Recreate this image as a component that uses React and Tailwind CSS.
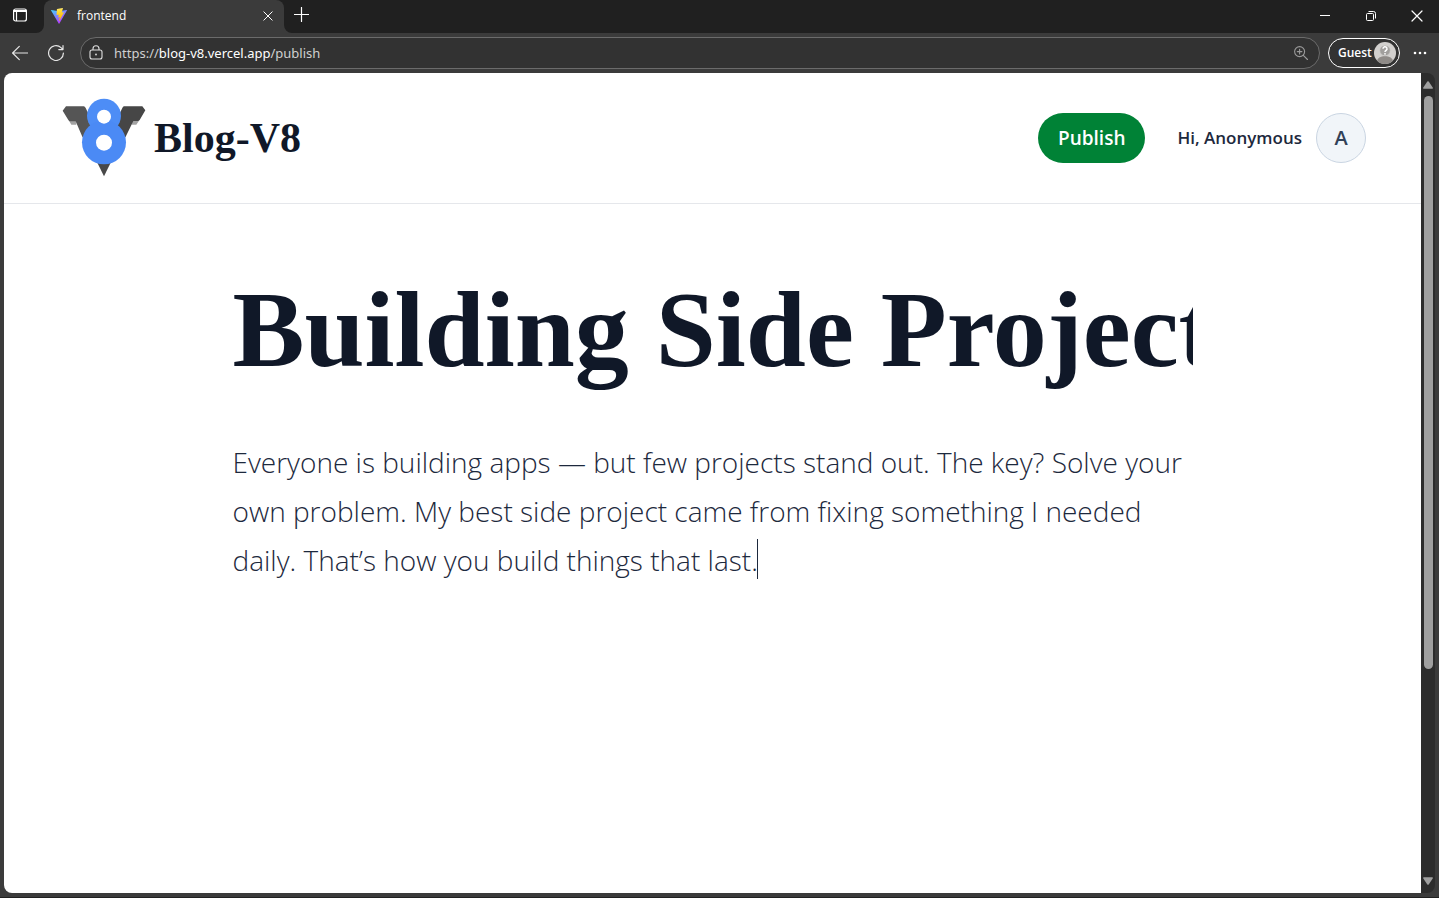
import React from "react";

const UI_FONT = "font-['Open_Sans','Noto_Sans',sans-serif]";
const SERIF_FONT = "font-['Liberation_Serif',serif]";

function ViteLogo() {
  return (
    <svg viewBox="0 0 16 16" className="size-4 shrink-0" aria-hidden="true">
      <defs>
        <linearGradient id="vite-body" x1="0" y1="0" x2="0.6" y2="1">
          <stop offset="0" stopColor="#41d1ff" />
          <stop offset="1" stopColor="#bd34fe" />
        </linearGradient>
        <linearGradient id="vite-bolt" x1="0.5" y1="0" x2="0.6" y2="1">
          <stop offset="0" stopColor="#ffea83" />
          <stop offset="0.2" stopColor="#ffdd35" />
          <stop offset="1" stopColor="#ffa800" />
        </linearGradient>
      </defs>
      <path d="M15.9 2.5 8.4 15.6a.4.4 0 0 1-.7 0L.1 2.5a.4.4 0 0 1 .4-.6L8 3.2l7.5-1.3a.4.4 0 0 1 .4.6Z" fill="url(#vite-body)" />
      <path d="m11.5 0-5.4 1.1a.2.2 0 0 0-.2.2L5.6 6.9a.2.2 0 0 0 .3.2l1.5-.3a.2.2 0 0 1 .3.2l-.5 2.2a.2.2 0 0 0 .3.2l1-.3a.2.2 0 0 1 .2.3l-.7 3.4c0 .2.2.3.3.1L12.9 4.5a.2.2 0 0 0-.2-.3l-1.6.3a.2.2 0 0 1-.2-.3l1-3.900a.2.2 0 0 0-.4-.3Z" fill="url(#vite-bolt)" />
    </svg>
  );
}

function TabActionsIcon() {
  return (
    <svg viewBox="0 0 16 16" className="size-4" fill="none" stroke="#fff" strokeWidth="1.2" aria-hidden="true">
      <rect x="1.6" y="2" width="12.8" height="12" rx="2" />
      <path d="M1.6 4h12.8" strokeWidth="2" />
      <path d="M4.5 4v10" />
    </svg>
  );
}

function CloseIcon({ className }) {
  return (
    <svg viewBox="0 0 12 12" className={className} stroke="#fff" strokeWidth="1.2" strokeLinecap="round" aria-hidden="true">
      <path d="m1 1 10 10M11 1 1 11" />
    </svg>
  );
}

function TabFlare({ className }) {
  return (
    <svg viewBox="0 0 8 8" className={className} fill="#3b3b3b" aria-hidden="true">
      <path d="M8 0v8H0a8 8 0 0 0 8-8Z" />
    </svg>
  );
}

function TabStrip() {
  return (
    <div className="flex h-[33px] shrink-0 bg-[#202020]">
      <button aria-label="Tab actions menu" className="flex w-11 items-center pb-1 pl-3">
        <TabActionsIcon />
      </button>
      <div className="relative flex w-60 items-center rounded-t-lg bg-[#3b3b3b] pr-2.5 pb-0.5 pl-[7px]">
        <TabFlare className="absolute bottom-0 -left-2 size-2" />
        <TabFlare className="absolute -right-2 bottom-0 size-2 -scale-x-100" />
        <ViteLogo />
        <span className="flex-1 pl-2.5 text-[12px] leading-4 text-white">frontend</span>
        <button aria-label="Close tab" className="flex size-3 items-center justify-center">
          <CloseIcon className="size-[10px]" />
        </button>
      </div>
      <button aria-label="New tab" className="ml-2.5 flex items-center pb-1">
        <svg viewBox="0 0 15 15" className="size-[15px]" stroke="#fff" strokeWidth="1.2" strokeLinecap="round" aria-hidden="true">
          <path d="M7.5.5v14M.5 7.5h14" />
        </svg>
      </button>
      <div className="-mr-px ml-auto flex pb-0.5">
        <button aria-label="Minimize" className="flex w-[46px] items-center justify-center">
          <svg viewBox="0 0 10 10" className="size-[10px]" stroke="#fff" aria-hidden="true">
            <path d="M0 4.5h10" />
          </svg>
        </button>
        <button aria-label="Restore" className="flex w-[46px] items-center justify-center">
          <svg viewBox="0 0 10 10" className="size-[10px]" fill="none" stroke="#fff" aria-hidden="true">
            <rect x=".5" y="2.5" width="7" height="7" rx="1" />
            <path d="M2.5.5h5a2 2 0 0 1 2 2v5" />
          </svg>
        </button>
        <button aria-label="Close window" className="flex w-[46px] items-center justify-center">
          <CloseIcon className="size-3" />
        </button>
      </div>
    </div>
  );
}

function Toolbar() {
  return (
    <div className="flex h-10 shrink-0 items-center bg-[#3b3b3b]">
      <button aria-label="Back" className="ml-3">
        <svg viewBox="0 0 16 16" className="size-4" fill="none" stroke="#e6e6e6" strokeWidth="1.2" strokeLinecap="round" strokeLinejoin="round" aria-hidden="true">
          <path d="M15.5 8H.8M7.3 1.3.6 8l6.7 6.7" />
        </svg>
      </button>
      <button aria-label="Refresh" className="ml-5">
        <svg viewBox="0 0 16 16" className="size-4" fill="none" stroke="#e6e6e6" strokeWidth="1.2" strokeLinecap="round" strokeLinejoin="round" aria-hidden="true">
          <path d="M15.4 8A7.4 7.4 0 1 1 13 2.6l1.8 1.7M15 .6v4h-4.2" />
        </svg>
      </button>
      <div className="ml-4 flex h-8 flex-1 items-center rounded-full border border-[#6b6b6b] bg-[#323232] pr-[11px] pl-2">
        <svg viewBox="0 0 14 16" className="h-4 w-[14px]" fill="none" stroke="#e0e0e0" strokeWidth="1.1" aria-hidden="true">
          <rect x="1" y="5" width="12" height="9" rx="2" />
          <path d="M4 5V3.8a3 3 0 0 1 6 0V5" />
          <circle cx="7" cy="9.5" r=".9" fill="#e0e0e0" stroke="none" />
        </svg>
        <a
          href="https://blog-v8.vercel.app/publish"
          className="ml-[11px] flex-1 font-['Noto_Sans',sans-serif] text-[13px] leading-5 text-[#d0d0d0]"
        >
          https://<span className="text-white">blog-v8.vercel.app</span>/publish
        </a>
        <button aria-label="Zoom">
          <svg viewBox="0 0 14 14" className="size-[14px]" fill="none" stroke="#9a9a9a" strokeWidth="1.1" strokeLinecap="round" aria-hidden="true">
            <circle cx="5.6" cy="5.6" r="5" />
            <path d="m9.3 9.3 4.2 4.2M5.6 3.3v4.6M3.3 5.6h4.6" />
          </svg>
        </button>
      </div>
      <button className="ml-2 flex h-[30px] w-[72px] items-center justify-between rounded-full border border-white bg-[#323232] pr-[3px] pl-[9px] text-[12px] font-semibold text-white">
        Guest
        <svg viewBox="0 0 22 22" className="size-[22px]" aria-hidden="true">
          <defs>
            <clipPath id="guest-clip">
              <circle cx="11" cy="11" r="11" />
            </clipPath>
          </defs>
          <g clipPath="url(#guest-clip)">
            <rect width="22" height="22" fill="#d2d0ce" />
            <ellipse cx="11" cy="19.5" rx="8" ry="5.5" fill="#8f8b88" />
            <circle cx="11" cy="8.5" r="5.3" fill="#a19f9d" stroke="#d2d0ce" strokeWidth=".8" />
            <path d="M9 6.8a2 2 0 1 1 3 1.7c-.7.4-1 .7-1 1.4" fill="none" stroke="#fff" strokeWidth="1.5" />
            <circle cx="11" cy="11.8" r=".9" fill="#fff" />
          </g>
        </svg>
      </button>
      <button aria-label="Settings and more" className="mr-3 ml-[13px]">
        <svg viewBox="0 0 14 4" className="h-1 w-[14px]" fill="#fff" aria-hidden="true">
          <circle cx="2" cy="2" r="1.3" />
          <circle cx="7" cy="2" r="1.3" />
          <circle cx="12" cy="2" r="1.3" />
        </svg>
      </button>
    </div>
  );
}

function BlogLogo() {
  return (
    <svg viewBox="36 22 252 240" className="h-20 w-[84px]" aria-hidden="true">
      <path d="M57 90h22v12H64ZM245 90h22l-8 12h-14Z" fill="#a3a3a3" />
      <path d="M48 47h53q4 0 6 5l55 113v55L97 138 77 92H60q-3 0-5-4L38 60Z" fill="#555" />
      <path d="M222 47h55l9 12-17 29q-2 3-5 3h-14l-23 47-65 82v-55l55-113q2-5 5-5Z" fill="#464646" />
      <path d="M142 216h40l-20 41Z" fill="#484848" />
      <circle cx="162" cy="75" r="51" fill="#4d8df6" />
      <circle cx="162" cy="155" r="66" fill="#4b8af5" />
      <circle cx="162" cy="78" r="21" fill="#fff" />
      <circle cx="162" cy="156" r="24" fill="#fff" />
    </svg>
  );
}

function SiteHeader() {
  return (
    <header className="flex h-[131px] items-center border-b border-gray-200 pr-[55px] pl-[58px]">
      <a href="#home" className="flex items-center gap-2 text-gray-900">
        <BlogLogo />
        <span className={`${SERIF_FONT} text-[42px] leading-none font-bold`}>Blog-V8</span>
      </a>
      <button className="ml-auto h-[50px] rounded-full bg-[#008236] px-5 text-[19px] font-semibold text-white">Publish</button>
      <span className="ml-8 text-[17px] font-semibold text-slate-800">Hi, Anonymous</span>
      <span className="ml-3.5 flex size-[50px] items-center justify-center rounded-full border border-slate-300 bg-slate-100 text-[20px] font-semibold text-slate-700">
        A
      </span>
    </header>
  );
}

function Editor() {
  return (
    <main className="mx-auto w-full max-w-[960px] pt-[66px]">
      <input
        aria-label="Title"
        defaultValue="Building Side Projects"
        className={`${SERIF_FONT} block h-[120px] w-full bg-transparent text-[108px] font-bold text-gray-900 outline-none`}
      />
      <div className="relative mt-12">
        <textarea
          aria-label="Story"
          rows={5}
          defaultValue="Everyone is building apps — but few projects stand out. The key? Solve your own problem. My best side project came from fixing something I needed daily. That’s how you build things that last."
          className="block w-full resize-none overflow-hidden bg-transparent text-[28px] leading-[49px] font-light text-slate-800 outline-none"
        />
        <span aria-hidden="true" className="absolute top-[101px] left-[524px] h-10 w-px bg-slate-800" />
      </div>
    </main>
  );
}

function Scrollbar() {
  return (
    <div className="flex w-[14px] shrink-0 flex-col items-center rounded-r-lg bg-[#2c2c2c] py-2" aria-hidden="true">
      <svg viewBox="0 0 10 8" className="h-2 w-[10px]" fill="#9f9f9f">
        <path d="M4.3.6a1 1 0 0 1 1.4 0L9.7 6.5a.8.8 0 0 1-.7 1.3H1a.8.8 0 0 1-.7-1.3Z" />
      </svg>
      <div className="flex w-full flex-1 flex-col items-center py-[7px]">
        <div className="h-[74%] w-[9px] rounded-full bg-[#9f9f9f]" />
      </div>
      <svg viewBox="0 0 10 8" className="h-2 w-[10px] rotate-180" fill="#9f9f9f">
        <path d="M4.3.6a1 1 0 0 1 1.4 0L9.7 6.5a.8.8 0 0 1-.7 1.3H1a.8.8 0 0 1-.7-1.3Z" />
      </svg>
    </div>
  );
}

export default function App() {
  return (
    <div className={`${UI_FONT} flex min-h-screen flex-col overflow-x-hidden border-b border-[#202020] bg-[#3b3b3b]`}>
      <TabStrip />
      <Toolbar />
      <div className="flex flex-1 pr-1 pb-1 pl-1">
        <div className="min-w-0 flex-1 rounded-l-lg bg-white">
          <SiteHeader />
          <Editor />
        </div>
        <Scrollbar />
      </div>
    </div>
  );
}
